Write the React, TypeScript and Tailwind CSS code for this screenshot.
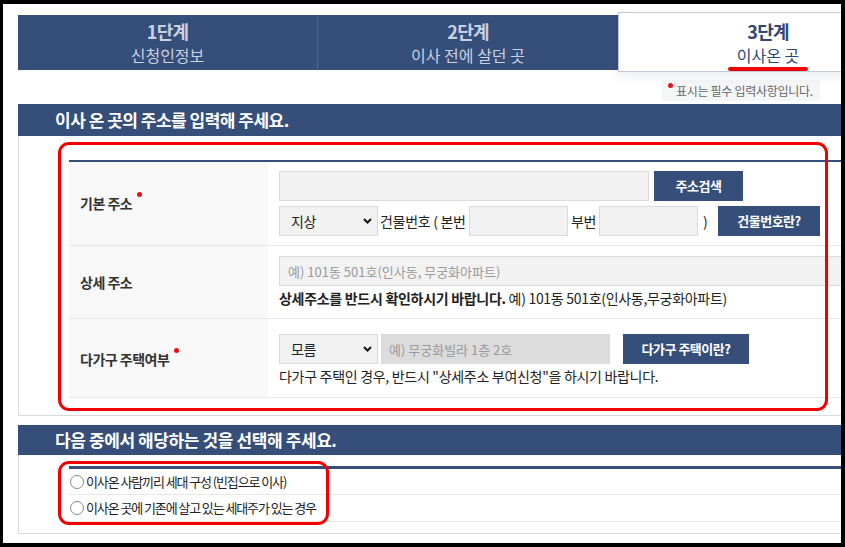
import React from "react";

const FONT = { fontFamily: '"Noto Sans CJK KR", "Noto Sans", sans-serif' };

function Chevron() {
  return (
    <svg className="absolute right-[6px] top-1/2 -translate-y-1/2 pointer-events-none" width="9" height="6" viewBox="0 0 9 6">
      <path d="M1 1 L4.5 4.5 L8 1" stroke="#111" strokeWidth="2" fill="none" />
    </svg>
  );
}

function Select({ value }: { value: string }) {
  return (
    <div className="relative w-[99px] h-[30px] shrink-0">
      <select
        defaultValue={value}
        className="appearance-none w-full h-full bg-[#f2f2f2] border border-[#dadada] pl-[11px] text-[14px] text-[#222] tracking-[-0.3px] outline-none"
        style={FONT}
      >
        <option>{value}</option>
      </select>
      <Chevron />
    </div>
  );
}

function Dot() {
  return <span className="inline-block w-[5px] h-[5px] rounded-full bg-[#e8101b] ml-[5px] mb-[18px]" />;
}

function NavyButton({ children, w }: { children: React.ReactNode; w: string }) {
  return (
    <button className={`${w} h-[30px] bg-[#354e7a] text-white text-[13px] font-bold tracking-[-0.5px] shrink-0`} style={FONT}>
      {children}
    </button>
  );
}

export default function App() {
  return (
    <div className="w-[845px] h-[547px] bg-black pt-[4px] pl-[3px] pr-[4px] pb-[4px]" style={FONT}>
      <div className="w-full h-full bg-white overflow-hidden">
        <div className="w-[920px] pl-[15px] pt-[8px]">
          {/* Steps */}
          <div className="flex items-start">
            <div className="mt-[3px] w-[300px] h-[55px] bg-[#354e7a] border-r border-[#4b6390] flex flex-col items-center justify-center">
              <div className="text-[18px] leading-[25px] font-bold text-[#c9d1e3] tracking-[-0.8px]">1단계</div>
              <div className="text-[16px] leading-[22px] text-[#c9d1e3]">신청인정보</div>
            </div>
            <div className="mt-[3px] w-[300px] h-[55px] bg-[#354e7a] flex flex-col items-center justify-center">
              <div className="text-[18px] leading-[25px] font-bold text-[#c9d1e3] tracking-[-0.8px]">2단계</div>
              <div className="text-[16px] leading-[22px] text-[#c9d1e3]">이사 전에 살던 곳</div>
            </div>
            <div className="w-[300px] h-[60px] bg-white border border-[#c3cadb] shadow-[0_5px_10px_rgba(40,50,80,0.08)] flex flex-col items-center pt-[6px]">
              <div className="text-[18px] leading-[25px] font-bold text-[#2f4674] tracking-[-0.8px]">3단계</div>
              <div className="text-[16px] leading-[22px] text-[#2f4674]">이사온 곳</div>
              <div className="w-[80px] h-[4px] rounded-full bg-[#f00000] mt-[1px]" />
            </div>
          </div>

          {/* Notice */}
          <div className="mt-[8px] ml-[644px] w-[158px] h-[21px] bg-[#f5f6f8] flex items-center pl-[6px]">
            <span className="inline-block w-[5px] h-[5px] rounded-full bg-[#e8101b] mb-[10px] mr-[3px]" />
            <span className="text-[12px] text-[#666] tracking-[-0.3px] whitespace-nowrap">표시는 필수 입력사항입니다.</span>
          </div>

          {/* Section 1 */}
          <div className="mt-[3px] w-[900px]">
            <div className="h-[32px] bg-[#354e7a] flex items-center pl-[37px]">
              <span className="text-[17px] font-bold text-white tracking-[-0.5px]">이사 온 곳의 주소를 입력해 주세요.</span>
            </div>
            <div className="relative border-l border-r border-b border-[#d9d9d9] pt-[24px] pb-[17px] pl-[50px]">
              <div className="border-t-2 border-[#354e7a]">
                {/* Row 1 */}
                <div className="flex border-b border-[#e8e8e8]">
                  <div className="w-[199px] bg-[#f8f8f8] flex items-center pl-[11px]">
                    <span className="text-[14px] font-bold text-[#333] tracking-[-0.5px]">기본 주소</span>
                    <Dot />
                  </div>
                  <div className="flex-1 pl-[11px] pt-[9px] pb-[9px] flex flex-col gap-[5px]">
                    <div className="flex items-center gap-[5px]">
                      <input className="w-[370px] h-[30px] bg-[#f2f2f2] border border-[#dadada] outline-none" />
                      <NavyButton w="w-[89px]">주소검색</NavyButton>
                    </div>
                    <div className="flex items-center text-[14px] text-[#222] tracking-[-0.3px]">
                      <Select value="지상" />
                      <span className="w-[91px] pl-[2px] whitespace-nowrap">건물번호 ( 본번</span>
                      <input className="w-[99px] h-[30px] bg-[#f2f2f2] border border-[#dadada] outline-none shrink-0" />
                      <span className="w-[31px] pl-[3px]">부번</span>
                      <input className="w-[99px] h-[30px] bg-[#f2f2f2] border border-[#dadada] outline-none shrink-0" />
                      <span className="w-[20px] pl-[5px]">)</span>
                      <NavyButton w="w-[102px]">건물번호란?</NavyButton>
                    </div>
                  </div>
                </div>
                {/* Row 2 */}
                <div className="flex border-b border-[#e8e8e8] h-[73px]">
                  <div className="w-[199px] bg-[#f8f8f8] flex items-center pl-[11px]">
                    <span className="text-[14px] font-bold text-[#333] tracking-[-0.5px]">상세 주소</span>
                  </div>
                  <div className="flex-1 pl-[11px] pt-[10px] flex flex-col">
                    <input
                      className="w-[600px] h-[30px] bg-[#f2f2f2] border border-[#dadada] outline-none pl-[8px] text-[13px] placeholder:text-[#9a9a9a]"
                      placeholder="예) 101동 501호(인사동, 무궁화아파트)"
                      style={FONT}
                    />
                    <div className="mt-[2px] text-[14px] leading-[20px] text-[#222] tracking-[-0.3px] whitespace-nowrap">
                      <b className="text-[#222]">상세주소를 반드시 확인하시기 바랍니다.</b> 예) 101동 501호(인사동,무궁화아파트)
                    </div>
                  </div>
                </div>
                {/* Row 3 */}
                <div className="flex border-b border-[#e8e8e8] h-[79px]">
                  <div className="w-[199px] bg-[#f8f8f8] flex items-center pl-[11px] pt-[2px]">
                    <span className="text-[14px] font-bold text-[#333] tracking-[-0.5px]">다가구 주택여부</span>
                    <Dot />
                  </div>
                  <div className="flex-1 pl-[11px] pt-[15px] flex flex-col">
                    <div className="flex items-center">
                      <Select value="모름" />
                      <input
                        disabled
                        className="ml-[3px] w-[229px] h-[30px] bg-[#dcdcdc] outline-none pl-[8px] text-[13px] placeholder:text-[#9a9a9a]"
                        placeholder="예) 무궁화빌라 1층 2호"
                        style={FONT}
                      />
                      <div className="ml-[13px]">
                        <NavyButton w="w-[126px]">다가구 주택이란?</NavyButton>
                      </div>
                    </div>
                    <div className="mt-[2px] text-[14px] leading-[20px] text-[#222] tracking-[-0.3px] whitespace-nowrap">
                      다가구 주택인 경우, 반드시 "상세주소 부여신청"을 하시기 바랍니다.
                    </div>
                  </div>
                </div>
              </div>
              <div className="absolute left-[39px] top-[6px] w-[770px] h-[269px] border-[3px] border-[#f20000] rounded-[11px] pointer-events-none" />
            </div>
          </div>

          {/* Section 2 */}
          <div className="mt-[9px] w-[900px]">
            <div className="h-[30px] bg-[#354e7a] flex items-center pl-[37px]">
              <span className="text-[17px] font-bold text-white tracking-[-0.4px]">다음 중에서 해당하는 것을 선택해 주세요.</span>
            </div>
            <div className="relative border-l border-r border-b border-[#d9d9d9] pt-[11px] pb-[11px] pl-[50px]">
              <div className="border-t-[3px] border-[#354e7a]">
                <div className="h-[26px] flex items-center border-b border-[#e8e8e8] pl-[1px]">
                  <span className="w-[14px] h-[14px] rounded-full border border-[#888] bg-white mr-[2px]" />
                  <span className="text-[13px] text-[#222] tracking-[-1.1px] whitespace-nowrap">이사온 사람끼리 세대 구성 (빈집으로 이사)</span>
                </div>
                <div className="h-[27px] flex items-center border-b border-[#e8e8e8] pl-[1px]">
                  <span className="w-[14px] h-[14px] rounded-full border border-[#888] bg-white mr-[2px]" />
                  <span className="text-[13px] text-[#222] tracking-[-1.1px] whitespace-nowrap">이사온 곳에 기존에 살고 있는 세대주가 있는 경우</span>
                </div>
              </div>
              <div className="absolute left-[39px] top-[6px] w-[271px] h-[64px] border-[3px] border-[#f20000] rounded-[11px] pointer-events-none" />
            </div>
          </div>
        </div>
      </div>
    </div>
  );
}
